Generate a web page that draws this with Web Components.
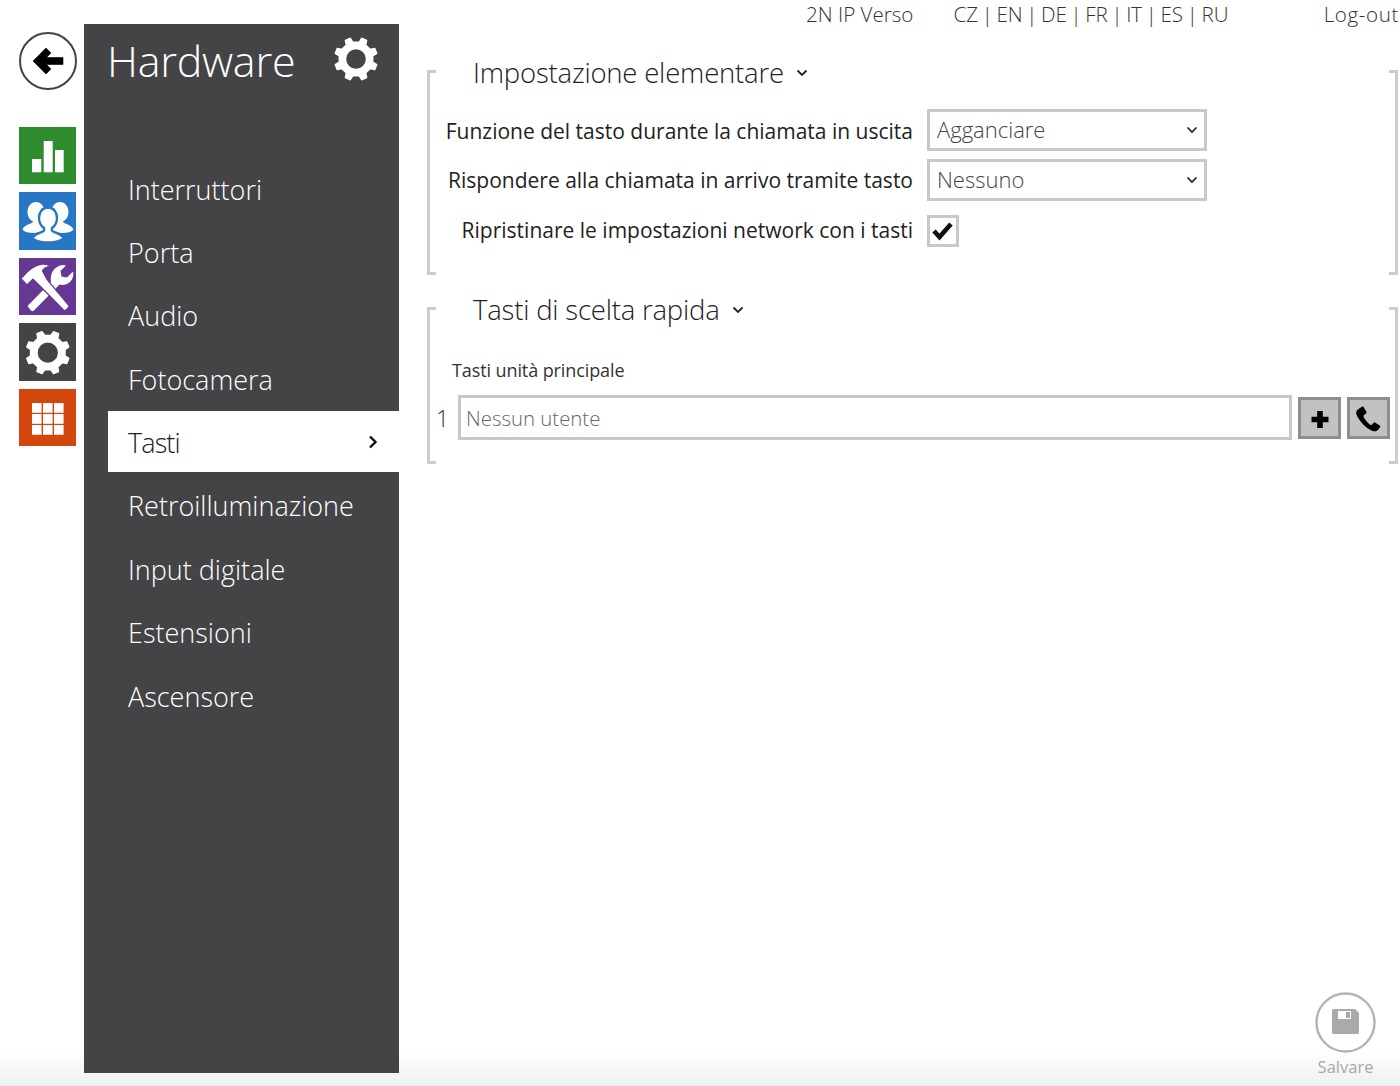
<!DOCTYPE html>
<html lang="it"><head><meta charset="utf-8"><title>Hardware</title>
<style>
html,body{margin:0;height:100%}
body{height:1086px;overflow:hidden;font-family:"Open Sans","Noto Sans",sans-serif;color:#222;background:#fff}
</style></head><body>
<template id="t-app"><style>
:host{display:grid;grid-template-columns:84px 315px 1fr;height:1086px;position:relative;background:linear-gradient(#fff 0,#fff 1050px,#eef0f0 1086px)}
.content{padding:70px 2px 0 28px;display:flex;flex-direction:column;gap:32px}
</style><slot name="top"></slot><slot name="rail"></slot><slot name="side"></slot><div class="content"><slot></slot></div><slot name="save"></slot></template>

<template id="t-top"><style>
:host{display:flex;height:28px;align-items:center;font-size:20.600px;line-height:28px;font-weight:300;color:#333;position:absolute;top:0;left:0;right:0}
span{white-space:nowrap;line-height:28px}
.a{margin-left:806px}.b{margin-left:40px;word-spacing:-1.750px}.c{margin-left:auto;margin-right:1px;letter-spacing:.6px}
</style><span class="a">2N IP Verso</span><span class="b">CZ | EN | DE | FR | IT | ES | RU</span><span class="c">Log-out</span></template>

<template id="t-rail"><style>
:host{display:flex;flex-direction:column;align-items:flex-start;padding:32px 0 0 19px;box-sizing:border-box;height:1086px}
.back{width:58px;height:58px;margin-bottom:37px;display:block}
.list{display:flex;flex-direction:column;gap:8px}
</style><svg class="back" viewBox="0 0 58 58"><circle cx="29" cy="29" r="28" fill="#fff" stroke="#444446" stroke-width="2"/><path d="M27 16l-13 13 13 13 5-5-4.500-4.500H44v-7H27.500l4.500-4.500z" fill="#000" stroke="#000" stroke-width=".6" stroke-linejoin="round"/></svg><div class="list"><slot></slot></div></template>

<template id="t-tile"><style>
:host{display:block;width:57.400px;height:57.400px;background:var(--c)}
svg{display:block;width:57.400px;height:57.400px}
</style><svg viewBox="0 0 57.400 57.400"><g fill="#fff" id="g"></g></svg></template>

<template id="t-side"><style>
:host{display:flex;flex-direction:column;background:#444446;margin-top:24px;height:1049px;box-sizing:border-box;color:#fff}
header{display:flex;height:133px;box-sizing:border-box;padding:0 20px 0 23px;align-items:flex-start;justify-content:space-between}
h1{font-size:43px;line-height:74px;font-weight:300;margin:0;letter-spacing:-.25px}
svg{width:46px;height:46px;margin-top:11.500px}
nav{display:flex;flex-direction:column;padding-left:24px}
</style><header><h1>Hardware</h1><svg viewBox="0 0 46 46"><path fill="#fff" stroke="#fff" stroke-width="1.400" stroke-linejoin="round" fill-rule="evenodd" id="gear"/></svg></header><nav><slot></slot></nav></template>

<template id="t-item"><style>
:host{display:flex;align-items:center;justify-content:space-between;height:61px;margin-bottom:2.400px;padding:3px 21px 0 20px;box-sizing:border-box;font-size:27px;font-weight:300;color:#fff}
:host([active]){background:#fff;color:#222;letter-spacing:-.9px}
svg{display:none;width:10px;height:14px}
:host([active]) svg{display:block;margin-top:-1px}
</style><span><slot></slot></span><svg viewBox="0 0 10 14"><path d="M2 1.500l5.500 5.500L2 12.500" fill="none" stroke="#111" stroke-width="2.400"/></svg></template>

<template id="t-sec"><style>
:host{display:block;position:relative;border-left:3px solid #ccc;border-right:3px solid #ccc;box-sizing:border-box;width:971px}
:host::before,:host::after{content:"";position:absolute;left:0;right:0;height:3px;background:linear-gradient(90deg,#ccc 6px,transparent 6px,transparent calc(100% - 6px),#ccc calc(100% - 6px))}
:host::before{top:0}:host::after{bottom:0}
h2{margin:0;font-size:27.500px;line-height:38px;font-weight:300;color:#222;display:flex;align-items:center;gap:12px;padding-left:43px;white-space:nowrap;position:relative;top:-8px;height:22px;letter-spacing:-.2px}
svg{width:12px;height:8px}
</style><h2><span id="title"></span><svg viewBox="0 0 12 8"><path d="M1.500 1.500L6 6l4.500-4.500" fill="none" stroke="#222" stroke-width="1.800"/></svg></h2><slot></slot></template>

<template id="t-row"><style>
:host{display:flex;align-items:center;gap:14px;height:42px;margin-bottom:7.500px}
label{width:483px;text-align:right;font-size:21px;font-weight:400;color:#222;white-space:nowrap;padding-top:1px}
</style><label id="l"></label><slot></slot></template>

<template id="t-sel"><style>
:host{display:flex;align-items:center;justify-content:space-between;width:280px;height:42px;box-sizing:border-box;border:3px solid #c8c8c8;padding:0 6px 0 7px;font-size:22px;font-weight:300;color:#444;background:#fff}
span{padding-bottom:2px}
svg{width:12px;height:8px}
</style><span><slot></slot></span><svg viewBox="0 0 12 8"><path d="M1.500 1.500L6 6l4.500-4.500" fill="none" stroke="#222" stroke-width="1.700"/></svg></template>

<template id="t-chk"><style>
:host{display:block;width:32px;height:32px;box-sizing:border-box;border:3px solid #c8c8c8;background:#fff;margin-top:3px}
svg{display:block;width:26px;height:26px}
</style><svg viewBox="0 0 26 26"><path d="M4 13l5.500 6L21 6" fill="none" stroke="#111" stroke-width="4.600"/></svg></template>

<template id="t-num"><style>
:host{display:flex;align-items:center;height:45px;gap:9px;padding-left:6px}
b{font-weight:300;font-size:23px;color:#333;width:13px}
.in{flex:none;width:834px;height:45px;box-sizing:border-box;border:3px solid #c8c8c8;padding:0 5px;display:flex;align-items:center;font-size:20.400px;font-weight:300;color:#666;background:#fff}
.btns{display:flex;gap:6px;margin-left:-3px;flex:none}
</style><b id="n"></b><div class="in"><slot></slot></div><div class="btns"><slot name="btn"></slot></div></template>

<template id="t-btn"><style>
:host{display:flex;align-items:center;justify-content:center;width:43px;height:42px;box-sizing:border-box;border:3px solid #8e8e8e;background:#c2c2c2}
svg{width:30px;height:30px;display:block}
</style><svg viewBox="0 0 30 30"><path id="p" fill="#000"/></svg></template>

<template id="t-save"><style>
:host{position:absolute;left:1315px;top:992px;width:61px;display:flex;flex-direction:column;align-items:center}
svg{width:61px;height:61px;display:block}
span{font-size:16.500px;line-height:20px;margin-top:4px;font-weight:400;color:#a6a8a8}
</style><svg viewBox="0 0 61 61"><circle cx="30.500" cy="30.500" r="29" fill="none" stroke="#b2b4b4" stroke-width="2.400"/><path fill="#a9abab" fill-rule="evenodd" d="M18.500 17H40l4 4v19.500a1.500 1.500 0 0 1-1.500 1.500h-24a1.500 1.500 0 0 1-1.500-1.500v-22a1.500 1.500 0 0 1 1.500-1.500zM23 19v8h13v-8z"/><rect x="31" y="20" width="4" height="6" fill="#a9abab"/></svg><span>Salvare</span></template>

<x-app>
  <x-top slot="top"></x-top>
  <x-rail slot="rail">
    <x-tile kind="chart" style="--c:#2e8b2e"></x-tile>
    <x-tile kind="users" style="--c:#2777c4"></x-tile>
    <x-tile kind="tools" style="--c:#653893"></x-tile>
    <x-tile kind="gear" style="--c:#444446"></x-tile>
    <x-tile kind="grid" style="--c:#d4470c"></x-tile>
  </x-rail>
  <x-side slot="side">
    <x-item>Interruttori</x-item>
    <x-item>Porta</x-item>
    <x-item>Audio</x-item>
    <x-item>Fotocamera</x-item>
    <x-item active>Tasti</x-item>
    <x-item>Retroilluminazione</x-item>
    <x-item>Input digitale</x-item>
    <x-item>Estensioni</x-item>
    <x-item>Ascensore</x-item>
  </x-side>
  <x-sec title-text="Impostazione elementare" style="height:205px">
    <div style="height:17px"></div>
    <x-row label="Funzione del tasto durante la chiamata in uscita"><x-sel>Agganciare</x-sel></x-row>
    <x-row label="Rispondere alla chiamata in arrivo tramite tasto"><x-sel>Nessuno</x-sel></x-row>
    <x-row label="Ripristinare le impostazioni network con i tasti"><x-chk></x-chk></x-row>
  </x-sec>
  <x-sec title-text="Tasti di scelta rapida" style="height:157px">
    <div style="font-size:18px;font-weight:400;color:#333;padding:29px 0 0 22px;line-height:25px;height:37px;letter-spacing:-.1px">Tasti unità principale</div>
    <x-num n="1">Nessun utente<x-btn slot="btn" kind="plus"></x-btn><x-btn slot="btn" kind="phone"></x-btn></x-num>
  </x-sec>
  <x-save slot="save"></x-save>
</x-app>
<script>
function gearPath(cx,cy,R,r,hole,n){
  let d='';const a=Math.PI*2/n;
  for(let i=0;i<n;i++){
    const t=(i+.5)*a-Math.PI/2;
    const pts=[[r,t-a*.27],[R,t-a*.16],[R,t+a*.16],[r,t+a*.27]];
    pts.forEach((p,j)=>{const x=cx+p[0]*Math.cos(p[1]),y=cy+p[0]*Math.sin(p[1]);d+=(i==0&&j==0?'M':'L')+x.toFixed(2)+' '+y.toFixed(2)});
  }
  d+='Z M'+(cx+hole)+' '+cy+' a'+hole+' '+hole+' 0 1 0 '+(-2*hole)+' 0 a'+hole+' '+hole+' 0 1 0 '+(2*hole)+' 0Z';
  return d;
}
const side='M14 28v2c-2 2-9 3-10.500 7.500C5 40 10 41 16 41l12-3-4-10zM17 10c-5 0-8.500 4.500-8.500 10S12 30 17 30s8.500-4.500 8.500-10S22 10 17 10z';
const ART={
 chart:'<rect x="13" y="32" width="9.300" height="13.300"/><rect x="24.700" y="14" width="9" height="31.300"/><rect x="36" y="23" width="8.700" height="22.300"/>',
 users:'<path d="'+side+'"/><path transform="matrix(-1 0 0 1 58 0)" d="'+side+'"/><path stroke="#2777c4" stroke-width="2.400" d="M29 15.500C23 15.500 20 20.500 20 26 20 30 22 34 25 36V38.500C24 40.500 17 41.500 14.500 44.500 13.500 46 14 47 16 48 19 49.500 24 50.500 29 50.500S39 49.500 42 48C44 47 44.500 46 43.500 44.500 41 41.500 34 40.500 33 38.500V36C36 34 38 30 38 26 38 20.500 35 15.500 29 15.500Z"/>',
 tools:'<path d="M8.500 48 32 24C31 18 33 12 38 9c3-2 6-2.500 9-1.500L41.500 13l1 5.500 5.500 1 6-6c1 3.500 0 7.500-3 10.500-3 2.500-7 3.500-10.500 2.500L15 52.500c-1 1-2 1-3 0z"/><path stroke="#653893" stroke-width="1.200" d="M2 20.700C9 12 16 7 23 6.200 26 5.800 29 6.500 31.500 8c-4 .5-7 2.500-8 5l4.500 8.500L49.500 47c.7 1 .7 1.800 0 2.500l-2.500 2.500c-.8.7-1.700.7-2.500 0L21.500 28.500 14 21l-6 6z"/>',
 grid:'<rect x="13" y="14" width="9.600" height="9.800"/><rect x="24" y="14" width="9.600" height="9.800"/><rect x="35" y="14" width="9.600" height="9.800"/><rect x="13" y="25" width="9.600" height="9.800"/><rect x="24" y="25" width="9.600" height="9.800"/><rect x="35" y="25" width="9.600" height="9.800"/><rect x="13" y="36" width="9.600" height="9.800"/><rect x="24" y="36" width="9.600" height="9.800"/><rect x="35" y="36" width="9.600" height="9.800"/>'
};
const BTN={
 plus:'M12.200 8h5.600v5.700h5.700v5.600h-5.700V25h-5.600v-5.700H6.500v-5.600h5.700z',
 phone:'M6 5l2-1.200c.7-.4 1.400-.2 1.800.5l2.500 4.500c.4.700.2 1.300-.4 1.800L10 12c-.6.500-.7 1.100-.4 1.800.8 2.300 4.500 6.700 6.600 7.900.7.400 1.300.3 1.800-.3l1.500-1.500c.6-.5 1.200-.6 1.900-.2l4.300 2.700c.7.500.8 1.100.3 1.800l-1.400 2.100c-1.400 1.900-3.800 2.500-6 1.600C12 25.500 4.500 17.500 2.300 11 1.600 8.700 3.400 6.300 6 5z'
};
function def(name,tpl,init){
  customElements.define(name,class extends HTMLElement{
    constructor(){super();const s=this.attachShadow({mode:'open'});s.appendChild(document.getElementById(tpl).content.cloneNode(true));}
    connectedCallback(){if(init)init(this,this.shadowRoot);}
  });
}
def('x-app','t-app');def('x-top','t-top');def('x-rail','t-rail');
def('x-tile','t-tile',(h,s)=>{const k=h.getAttribute('kind'),g=s.getElementById('g');
  if(k==='gear'){g.innerHTML='<path fill-rule="evenodd" stroke="#fff" stroke-width="1.400" stroke-linejoin="round" d="'+gearPath(28.800,29.700,21.800,17.500,10.800,8)+'"/>'}
  else g.innerHTML=ART[k];});
def('x-side','t-side',(h,s)=>{s.getElementById('gear').setAttribute('d',gearPath(23,23,21.500,17,10.500,8))});
def('x-item','t-item');
def('x-sec','t-sec',(h,s)=>{s.getElementById('title').textContent=h.getAttribute('title-text')});
def('x-row','t-row',(h,s)=>{s.getElementById('l').textContent=h.getAttribute('label')});
def('x-sel','t-sel');def('x-chk','t-chk');
def('x-num','t-num',(h,s)=>{s.getElementById('n').textContent=h.getAttribute('n')});
def('x-btn','t-btn',(h,s)=>{s.getElementById('p').setAttribute('d',BTN[h.getAttribute('kind')])});
def('x-save','t-save');
</script>
</body></html>
